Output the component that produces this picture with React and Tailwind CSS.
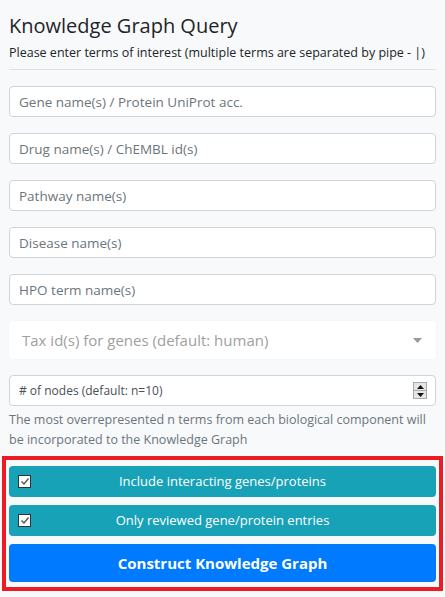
import React from "react";

const font = { fontFamily: '"Open Sans", "Noto Sans", sans-serif' };

function TextInput({ placeholder }) {
  return (
    <input
      type="text"
      placeholder={placeholder}
      className="block w-full h-[31px] rounded-[4px] border border-[#ced4da] bg-white px-[9px] text-[13.5px] text-[#495057] placeholder:text-[#6c757d] outline-none"
    />
  );
}

function Check() {
  return (
    <span className="flex h-[13px] w-[13px] items-center justify-center border border-[#333] bg-white">
      <svg width="10" height="9" viewBox="0 0 10 9">
        <path d="M1.5 4.5 L4 7 L8.5 1.5" fill="none" stroke="#555" strokeWidth="1.4" />
      </svg>
    </span>
  );
}

export default function App() {
  return (
    <div className="min-h-[597px] w-[445px] bg-[#f8f9fa] text-[#212529]" style={font}>
      <div className="px-[9px] pt-[14px]">
        <h1 className="text-[20px] leading-[24px] font-normal text-[#212529]">Knowledge Graph Query</h1>
        <p className="mt-[7px] text-[12.5px] leading-[16px] text-[#212529] whitespace-nowrap">
          Please enter terms of interest (multiple terms are separated by pipe - |)
        </p>
        <div className="mt-[8px] border-t border-[#dee2e6]" />
        <div className="mt-[16px] flex flex-col gap-[16px]">
          <TextInput placeholder="Gene name(s) / Protein UniProt acc." />
          <TextInput placeholder="Drug name(s) / ChEMBL id(s)" />
          <TextInput placeholder="Pathway name(s)" />
          <TextInput placeholder="Disease name(s)" />
          <TextInput placeholder="HPO term name(s)" />
        </div>
        <div className="mt-[16px] flex h-[38px] items-center justify-between rounded-[4px] bg-white pl-[13px] pr-[14px] shadow-[0_0_1px_rgba(0,0,0,0.08)]">
          <span className="text-[15px] text-[#a0a0a0]">Tax id(s) for genes (default: human)</span>
          <svg width="9" height="5" viewBox="0 0 9 5">
            <path d="M0 0 L9 0 L4.5 5 Z" fill="#999" />
          </svg>
        </div>
        <div className="mt-[16px] flex h-[31px] items-center justify-between rounded-[4px] border border-[#ced4da] bg-white pl-[9px] pr-[8px]">
          <span className="text-[12px] text-[#495057]"># of nodes (default: n=10)</span>
          <span className="flex h-[17px] w-[14px] flex-col border border-[#a9a9a9] bg-[#e6e6e6]">
            <span className="flex flex-1 items-center justify-center border-b border-[#a9a9a9]">
              <svg width="7" height="4" viewBox="0 0 7 4"><path d="M0 4 L7 4 L3.5 0 Z" fill="#111" /></svg>
            </span>
            <span className="flex flex-1 items-center justify-center">
              <svg width="7" height="4" viewBox="0 0 7 4"><path d="M0 0 L7 0 L3.5 4 Z" fill="#111" /></svg>
            </span>
          </span>
        </div>
        <p className="mt-[4px] text-[12.5px] leading-[20px] text-[#6c757d]">
          The most overrepresented n terms from each biological component will be incorporated to the Knowledge Graph
        </p>
      </div>
      <div className="mx-[2px] mt-[6px] border-[4px] border-[#ed1c24] px-[3px] pt-[6px] pb-[5px] flex flex-col gap-[8px]">
        <div className="relative flex h-[31px] items-center justify-center rounded-[4px] bg-[#17a2b8] text-[13px] text-white">
          <span className="absolute left-[9px] top-[9px]"><Check /></span>
          Include interacting genes/proteins
        </div>
        <div className="relative flex h-[31px] items-center justify-center rounded-[4px] bg-[#17a2b8] text-[13px] text-white">
          <span className="absolute left-[9px] top-[9px]"><Check /></span>
          Only reviewed gene/protein entries
        </div>
        <div className="flex h-[38px] items-center justify-center rounded-[4px] bg-[#007bff] text-[15px] font-bold text-white">
          Construct Knowledge Graph
        </div>
      </div>
    </div>
  );
}
